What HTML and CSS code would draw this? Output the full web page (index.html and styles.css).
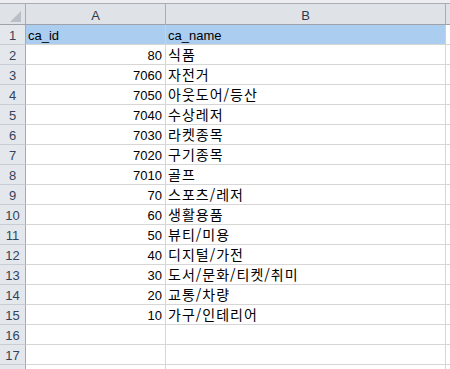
FILE: index.html
```html
<!DOCTYPE html>
<html lang="ko">
<head>
<meta charset="utf-8">
<title>Sheet1</title>
<link rel="stylesheet" href="styles.css">
</head>
<body>
<div class="window">
  <div class="topband"></div>
  <div class="sheet">
    <div class="corner"><span class="tri"></span></div>
    <div class="colhead">A</div>
    <div class="colhead">B</div>
    <div class="colhead last"></div>

    <div class="rowhead">1</div>
    <div class="cell lat fill">ca_id</div>
    <div class="cell lat fill">ca_name</div>
    <div class="cell last"></div>

    <div class="rowhead">2</div><div class="cell num">80</div><div class="cell kor">식품</div><div class="cell last"></div>
    <div class="rowhead">3</div><div class="cell num">7060</div><div class="cell kor">자전거</div><div class="cell last"></div>
    <div class="rowhead">4</div><div class="cell num">7050</div><div class="cell kor">아웃도어/등산</div><div class="cell last"></div>
    <div class="rowhead">5</div><div class="cell num">7040</div><div class="cell kor">수상레저</div><div class="cell last"></div>
    <div class="rowhead">6</div><div class="cell num">7030</div><div class="cell kor">라켓종목</div><div class="cell last"></div>
    <div class="rowhead">7</div><div class="cell num">7020</div><div class="cell kor">구기종목</div><div class="cell last"></div>
    <div class="rowhead">8</div><div class="cell num">7010</div><div class="cell kor">골프</div><div class="cell last"></div>
    <div class="rowhead">9</div><div class="cell num">70</div><div class="cell kor">스포츠/레저</div><div class="cell last"></div>
    <div class="rowhead">10</div><div class="cell num">60</div><div class="cell kor">생활용품</div><div class="cell last"></div>
    <div class="rowhead">11</div><div class="cell num">50</div><div class="cell kor">뷰티/미용</div><div class="cell last"></div>
    <div class="rowhead">12</div><div class="cell num">40</div><div class="cell kor">디지털/가전</div><div class="cell last"></div>
    <div class="rowhead">13</div><div class="cell num">30</div><div class="cell kor">도서/문화/티켓/취미</div><div class="cell last"></div>
    <div class="rowhead">14</div><div class="cell num">20</div><div class="cell kor">교통/차량</div><div class="cell last"></div>
    <div class="rowhead">15</div><div class="cell num">10</div><div class="cell kor">가구/인테리어</div><div class="cell last"></div>
    <div class="rowhead">16</div><div class="cell"></div><div class="cell"></div><div class="cell last"></div>
    <div class="rowhead">17</div><div class="cell"></div><div class="cell"></div><div class="cell last"></div>
    <div class="rowhead"></div><div class="cell"></div><div class="cell"></div><div class="cell last"></div>
  </div>
</div>
</body>
</html>
```

FILE: styles.css
```css
html, body {
  margin: 0;
  padding: 0;
  background: #ffffff;
}

.window {
  width: 450px;
  height: 369px;
  overflow: hidden;
  font-family: "Liberation Sans", "Noto Sans CJK KR", sans-serif;
  font-size: 13px;
  color: #000000;
}

.topband {
  height: 3px;
  background: #eceef1;
  border-bottom: 1px solid #a9acb0;
}

.sheet {
  display: grid;
  grid-template-columns: 26px 140px 280px 1fr;
  grid-template-rows: 21px;
  grid-auto-rows: 20px;
}

.sheet > div {
  box-sizing: border-box;
  white-space: nowrap;
}

/* header strip */
.corner,
.colhead {
  background: #dfe3e8;
  border-right: 1px solid #aaadb2;
  border-bottom: 1px solid #9ea2a8;
}

.corner {
  position: relative;
}

.corner .tri {
  position: absolute;
  left: 10px;
  top: 7px;
  width: 0;
  height: 0;
  border-left: 11px solid transparent;
  border-bottom: 11px solid #b9bfc7;
}

.colhead {
  text-align: center;
  line-height: 23px;
  color: #2e3a4c;
}

.colhead.last {
  border-right: none;
}

/* row numbers */
.rowhead {
  background: #e4e8ed;
  border-right: 1px solid #a6a9ae;
  border-bottom: 1px solid #c9cdd3;
  text-align: center;
  line-height: 19px;
  padding-top: 1px;
  color: #34435a;
}

/* body cells */
.cell {
  border-right: 1px solid #d6d6d6;
  border-bottom: 1px solid #d6d6d6;
  line-height: 19px;
  padding-top: 1px;
}

.cell.last {
  border-right: none;
}

.cell.fill {
  background: #abcdef;
  border-right-color: #b8d5f2;
}

.lat {
  padding-left: 2px;
}

.num {
  text-align: right;
  padding-right: 3px;
}

.kor {
  padding-left: 2px;
  padding-top: 0;
  font-family: "Noto Sans CJK KR", "Liberation Sans", sans-serif;
  font-size: 14px;
  letter-spacing: 1px;
  line-height: 19px;
}
```
